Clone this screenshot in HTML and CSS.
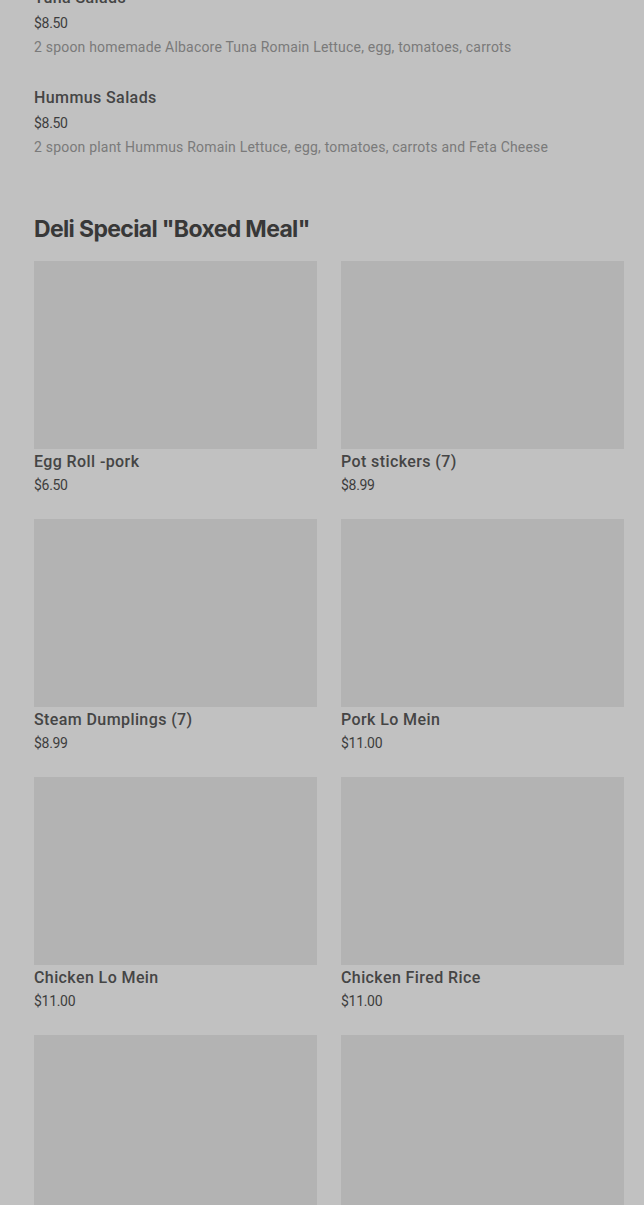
FILE: index.html
```html
<!doctype html>
<html>
 <head>
  <link rel="stylesheet" href="styles.css">
 </head>
 <body>
  <div class="menu">
   <div class="lista">
    <div class="plato">
     <div class="nombre">Tuna Salads</div>
     <div class="precio">$8.50</div>
     <div class="desc">2 spoon homemade Albacore Tuna Romain Lettuce, egg, tomatoes, carrots</div>
    </div>
    <div class="plato">
     <div class="nombre">Hummus Salads</div>
     <div class="precio">$8.50</div>
     <div class="desc">2 spoon plant Hummus Romain Lettuce, egg, tomatoes, carrots and Feta Cheese</div>
    </div>
   </div>

   <h2 class="titulo">Deli Special "Boxed Meal"</h2>
   <div class="rejilla">
    <div class="tarjeta">
     <div class="foto"></div>
     <div class="nombre">Egg Roll -pork</div>
     <div class="precio">$6.50</div>
    </div>
    <div class="tarjeta">
     <div class="foto"></div>
     <div class="nombre">Pot stickers (7)</div>
     <div class="precio">$8.99</div>
    </div>
    <div class="tarjeta">
     <div class="foto"></div>
     <div class="nombre">Steam Dumplings (7)</div>
     <div class="precio">$8.99</div>
    </div>
    <div class="tarjeta">
     <div class="foto"></div>
     <div class="nombre">Pork Lo Mein</div>
     <div class="precio">$11.00</div>
    </div>
    <div class="tarjeta">
     <div class="foto"></div>
     <div class="nombre">Chicken Lo Mein</div>
     <div class="precio">$11.00</div>
    </div>
    <div class="tarjeta">
     <div class="foto"></div>
     <div class="nombre">Chicken Fired Rice</div>
     <div class="precio">$11.00</div>
    </div>
    <div class="tarjeta">
     <div class="foto"></div>
     <div class="nombre">Beef Broccoli</div>
     <div class="precio">$12.00</div>
    </div>
    <div class="tarjeta">
     <div class="foto"></div>
     <div class="nombre">Orange Chicken</div>
     <div class="precio">$12.00</div>
    </div>
   </div>
  </div>
 </body>
</html>
```

FILE: styles.css
```css
html, body {
    margin: 0;
    padding: 0;
    background-color: #c1c1c1; /* fondo con capa gris */
    height: 100%;
    overflow: hidden;
}
body {
    font-family: Roboto, "Liberation Sans", sans-serif;
    color: #3d3d3d;
}
.menu {
    margin-top: -14px; /* pagina desplazada */
    padding: 0 20px 0 34px;
}
.plato {
    margin-bottom: 29px;
}
.nombre {
    font-size: 16px;
    line-height: 24px;
    font-weight: 500;
    letter-spacing: 0.4px;
    color: #454545;
}
.precio {
    font-size: 14px;
    line-height: 20px;
    margin-top: 3px;
    letter-spacing: -0.3px;
}
.desc {
    font-size: 14px;
    line-height: 20px;
    margin-top: 4px;
    letter-spacing: 0.2px;
    color: #7a7a7a;
}
.titulo {
    font-family: Inter, "Noto Sans", sans-serif;
    font-size: 23px;
    line-height: 32px;
    font-weight: 700;
    letter-spacing: -0.65px;
    margin: 56px 0 16px;
    color: #383838;
}
.rejilla {
    display: grid;
    grid-template-columns: 1fr 1fr;
    column-gap: 24px;
    row-gap: 24px;
}
.foto {
    height: 188px;
    background-color: #b3b3b3;
}
.tarjeta .nombre {
    line-height: 22px;
    margin-top: 2px;
}
.tarjeta .precio {
    margin-top: 2px;
}
```
